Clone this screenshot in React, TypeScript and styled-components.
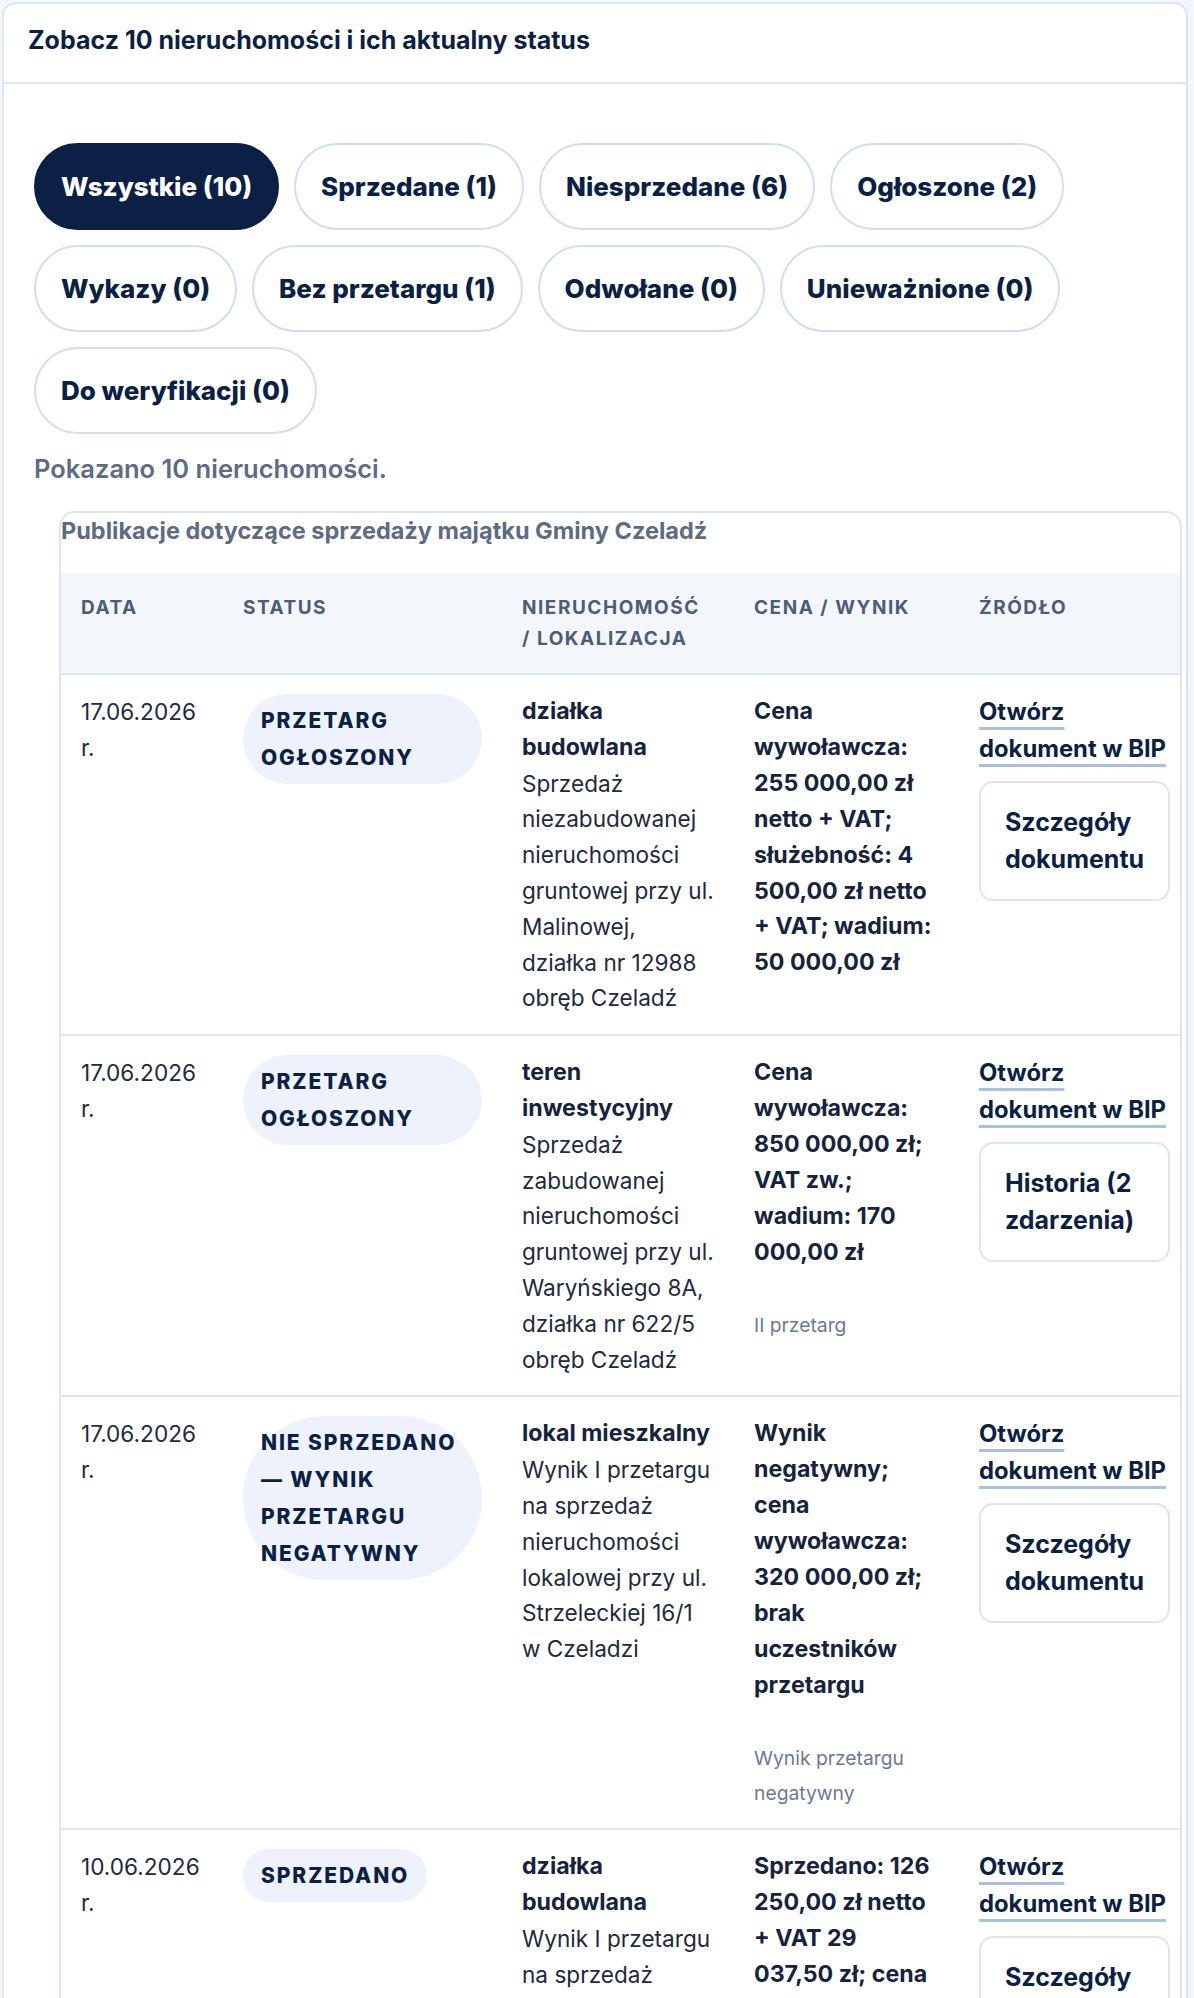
import React from "react";
import styled, { createGlobalStyle } from "styled-components";

const GlobalStyle = createGlobalStyle`
  * { box-sizing: border-box; }
  html, body {
    margin: 0;
    padding: 0;
    background: #f3f6fa;
  }
  body {
    font-family: Inter, "Noto Sans", "Liberation Sans", sans-serif;
    color: #1e2a3d;
  }
`;

type Row = {
  date: string;
  status: string;
  title: string;
  desc: string;
  price: string;
  note?: string;
  action: string;
};

const filters = [
  { label: "Wszystkie (10)", active: true },
  { label: "Sprzedane (1)" },
  { label: "Niesprzedane (6)" },
  { label: "Ogłoszone (2)" },
  { label: "Wykazy (0)" },
  { label: "Bez przetargu (1)" },
  { label: "Odwołane (0)" },
  { label: "Unieważnione (0)" },
  { label: "Do weryfikacji (0)" },
];

const rows: Row[] = [
  {
    date: "17.06.2026 r.",
    status: "Przetarg ogłoszony",
    title: "działka budowlana",
    desc: "Sprzedaż niezabudowanej nieruchomości gruntowej przy ul. Malinowej, działka nr 12988 obręb Czeladź",
    price:
      "Cena wywoławcza: 255 000,00 zł netto + VAT; służebność: 4 500,00 zł netto + VAT; wadium: 50 000,00 zł",
    action: "Szczegóły dokumentu",
  },
  {
    date: "17.06.2026 r.",
    status: "Przetarg ogłoszony",
    title: "teren inwestycyjny",
    desc: "Sprzedaż zabudowanej nieruchomości gruntowej przy ul. Waryńskiego 8A, działka nr 622/5 obręb Czeladź",
    price: "Cena wywoławcza: 850 000,00 zł; VAT zw.; wadium: 170 000,00 zł",
    note: "II przetarg",
    action: "Historia (2 zdarzenia)",
  },
  {
    date: "17.06.2026 r.",
    status: "Nie sprzedano — wynik przetargu negatywny",
    title: "lokal mieszkalny",
    desc: "Wynik I przetargu na sprzedaż nieruchomości lokalowej przy ul. Strzeleckiej 16/1 w Czeladzi",
    price:
      "Wynik negatywny; cena wywoławcza: 320 000,00 zł; brak uczestników przetargu",
    note: "Wynik przetargu negatywny",
    action: "Szczegóły dokumentu",
  },
  {
    date: "10.06.2026 r.",
    status: "Sprzedano",
    title: "działka budowlana",
    desc: "Wynik I przetargu na sprzedaż nieruchomości gruntowej przy ul. Słowackiego, działka nr 1456/2 obręb Czeladź",
    price:
      "Sprzedano: 126 250,00 zł netto + VAT 29 037,50 zł; cena wywoławcza: 120 000,00 zł netto",
    note: "Wynik przetargu pozytywny",
    action: "Szczegóły dokumentu",
  },
];

const App = () => {
  return (
    <Page>
      <GlobalStyle />
      <Card>
        <CardHeader>
          <CardTitle>Zobacz 10 nieruchomości i ich aktualny status</CardTitle>
        </CardHeader>
        <CardBody>
          <FilterList>
            {filters.map((f) => (
              <FilterPill key={f.label} $active={!!f.active}>
                {f.label}
              </FilterPill>
            ))}
          </FilterList>
          <Summary>Pokazano 10 nieruchomości.</Summary>
          <TableWrap>
            <Table>
              <Caption>Publikacje dotyczące sprzedaży majątku Gminy Czeladź</Caption>
              <colgroup>
                <col style={{ width: 162 }} />
                <col style={{ width: 279 }} />
                <col style={{ width: 232 }} />
                <col style={{ width: 225 }} />
                <col />
              </colgroup>
              <thead>
                <tr>
                  <Th>Data</Th>
                  <Th>Status</Th>
                  <Th>Nieruchomość / lokalizacja</Th>
                  <Th>Cena / wynik</Th>
                  <Th>Źródło</Th>
                </tr>
              </thead>
              <tbody>
                {rows.map((r, i) => (
                  <tr key={i}>
                    <Td>{r.date}</Td>
                    <Td>
                      <Badge>{r.status}</Badge>
                    </Td>
                    <Td>
                      <PlaceTitle>{r.title}</PlaceTitle>
                      {r.desc}
                    </Td>
                    <Td>
                      <Price>{r.price}</Price>
                      {r.note && <Note>{r.note}</Note>}
                    </Td>
                    <SourceTd>
                      <div>
                        <SourceLink href="#">Otwórz dokument w BIP</SourceLink>
                      </div>
                      <DetailsButton type="button">{r.action}</DetailsButton>
                    </SourceTd>
                  </tr>
                ))}
              </tbody>
            </Table>
          </TableWrap>
        </CardBody>
      </Card>
    </Page>
  );
};

export default App;

const navy = "#0c1f45";
const line = "#dde6f0";

const Page = styled.div`
  padding: 2px 6px 0 2px;
`;

const Card = styled.section`
  width: 1186px;
  background: #ffffff;
  border: 2px solid ${line};
  border-radius: 14px;
`;

const CardHeader = styled.header`
  padding: 18px 24px 24px;
  border-bottom: 2px solid ${line};
`;

const CardTitle = styled.h2`
  margin: 0;
  font-size: 25px;
  line-height: 36px;
  font-weight: 700;
  color: ${navy};
`;

const CardBody = styled.div`
  padding: 59px 4px 0 30px;
`;

const FilterList = styled.div`
  display: flex;
  flex-wrap: wrap;
  gap: 15px;
`;

const FilterPill = styled.button<{ $active: boolean }>`
  padding: 23px 25px;
  border-radius: 999px;
  border: 2px solid ${(p) => (p.$active ? navy : "#d3deec")};
  background: ${(p) => (p.$active ? navy : "#ffffff")};
  color: ${(p) => (p.$active ? "#ffffff" : navy)};
  font-family: inherit;
  font-size: 26px;
  line-height: 37px;
  font-weight: 800;
  cursor: pointer;
`;

const Summary = styled.p`
  margin: 17px 0 24px;
  font-size: 25.5px;
  line-height: 36px;
  font-weight: 600;
  color: #5d6b84;
`;

const TableWrap = styled.div`
  margin-left: 25px;
  border: 2px solid ${line};
  border-bottom: none;
  border-radius: 16px 16px 0 0;
  overflow: hidden;
`;

const Table = styled.table`
  width: 100%;
  table-layout: fixed;
  border-collapse: separate;
  border-spacing: 0;
`;

const Caption = styled.caption`
  caption-side: top;
  text-align: left;
  padding: 0 0 24px;
  font-size: 23.5px;
  line-height: 36px;
  font-weight: 700;
  color: #5d6b84;
`;

const Th = styled.th`
  padding: 19px 20px;
  background: #f3f7fb;
  border-bottom: 2px solid ${line};
  text-align: left;
  vertical-align: top;
  font-size: 19px;
  line-height: 31px;
  font-weight: 700;
  letter-spacing: 0.08em;
  text-transform: uppercase;
  color: #4d5c77;
`;

const Td = styled.td`
  padding: 19px 20px 18px;
  vertical-align: top;
  border-bottom: 2px solid ${line};
  font-size: 22.6px;
  line-height: 35.8px;
  color: #1e2a3d;
`;

const SourceTd = styled(Td)`
  padding-right: 10px;
`;

const Badge = styled.span`
  display: inline-block;
  max-width: 100%;
  padding: 8px 18px;
  border-radius: 999px;
  background: #edf2fc;
  color: ${navy};
  font-size: 21px;
  line-height: 37px;
  font-weight: 800;
  letter-spacing: 0.09em;
  text-transform: uppercase;
`;

const PlaceTitle = styled.strong`
  display: block;
  font-size: 23.2px;
  line-height: 35.8px;
  font-weight: 700;
  color: #16233d;
`;

const Price = styled.strong`
  display: block;
  font-size: 23.2px;
  line-height: 35.9px;
  font-weight: 700;
  color: #16233d;
`;

const Note = styled.small`
  display: block;
  margin-top: 37px;
  margin-bottom: -2px;
  font-size: 19.3px;
  line-height: 35.8px;
  color: #6b7a93;
`;

const SourceLink = styled.a`
  font-size: 23.8px;
  line-height: 36.5px;
  font-weight: 700;
  color: ${navy};
  text-decoration: underline;
  text-decoration-color: #a9c0e1;
  text-decoration-thickness: 3px;
  text-underline-offset: 7px;
`;

const DetailsButton = styled.button`
  display: block;
  width: 100%;
  margin-top: 14px;
  padding: 21px 24px;
  border: 2px solid ${line};
  border-radius: 14px;
  background: #ffffff;
  font-family: inherit;
  font-size: 25px;
  line-height: 37px;
  font-weight: 700;
  color: ${navy};
  text-align: left;
  cursor: pointer;
`;
